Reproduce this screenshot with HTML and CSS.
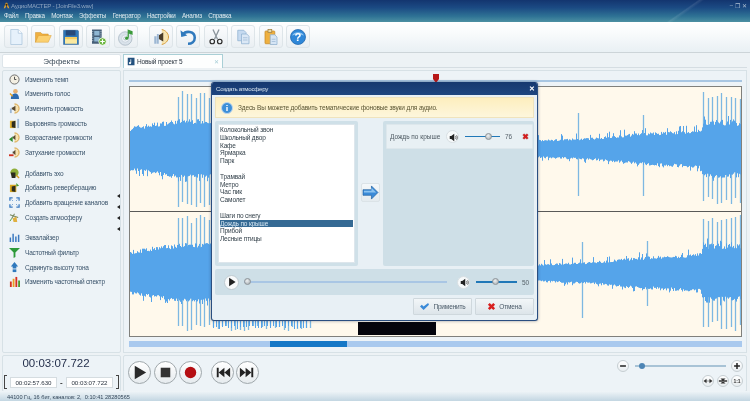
FILE: index.html
```html
<!DOCTYPE html>
<html lang="ru">
<head>
<meta charset="utf-8">
<title>АудиоМАСТЕР</title>
<link rel="stylesheet" href="styles.css">
</head>
<body>
<div class="app">
  <header class="titlebar">
    <div class="title-row">
      <svg class="app-icon" viewBox="0 0 10 10"><path d="M1 9 4 1h2l3 8H7L5 5 3 9z" fill="#e0a030"/><circle cx="5" cy="4" r="1.6" fill="#3a2a10"/></svg>
      <span class="title-text">АудиоМАСТЕР - [JoinFile3.wav]</span>
      <div class="win-btns"><span>–</span><span>❐</span><span>✕</span></div>
    </div>
    <nav class="menu"><span>Файл</span><span>Правка</span><span>Монтаж</span><span>Эффекты</span><span>Генератор</span><span>Настройки</span><span>Анализ</span><span>Справка</span></nav>
    <div class="streak"></div>
  </header>

  <div class="toolbar">
    <div class="tb"><svg viewBox="0 0 24 24"><path d="M5 2h10l5 5v15H5z" fill="#e6f1fb" stroke="#a9c4dc"/><path d="M15 2v5h5" fill="#fff" stroke="#a9c4dc"/></svg></div>
    <div class="tb"><svg viewBox="0 0 24 24"><path d="M2 19V6h7l2 2h8v3H7z" fill="#f0b040" stroke="#c98a20" stroke-width=".6"/><path d="M2 19l4-9h17l-4 9z" fill="#fbd070" stroke="#d89a30" stroke-width=".6"/></svg></div>
    <div class="tb"><svg viewBox="0 0 24 24"><path d="M2 3h19l1 1v18H2z" fill="#2f77b8" stroke="#255a8a" stroke-width=".6"/><rect x="5" y="3" width="13" height="7" fill="#26497a"/><rect x="4" y="12" width="16" height="9" fill="#fbe9a0"/><rect x="4" y="12" width="16" height="3" fill="#f5cd60"/></svg></div>
    <div class="tb"><svg viewBox="0 0 24 24"><rect x="4" y="2" width="13" height="19" fill="#465f78"/><rect x="7" y="4" width="7" height="6" fill="#8fb6d2"/><rect x="7" y="12" width="7" height="6" fill="#8fb6d2"/><path d="M5 4v15M16 4v15" stroke="#cfdde8" stroke-dasharray="1.5 1.5"/><circle cx="18" cy="18" r="5" fill="#68b43c" stroke="#fff"/><path d="M18 15v6M15 18h6" stroke="#fff" stroke-width="1.6"/></svg></div>
    <div class="tb"><svg viewBox="0 0 24 24"><circle cx="11" cy="14" r="9" fill="#d9e2ea" stroke="#a6b4c0"/><circle cx="11" cy="14" r="5" fill="#eef3f7" stroke="#c3ced8"/><circle cx="11" cy="14" r="2" fill="#fff" stroke="#9fb0bf"/><path d="M15 5V13M15 3l5 2v3l-5-2z" stroke="#3a9a3a" stroke-width="1.6" fill="#3a9a3a"/><circle cx="13" cy="13.500" r="2.200" fill="#3a9a3a"/></svg></div>
    <div class="tb tb-gap"><svg viewBox="0 0 24 24"><path d="M13 2c5 1 9 5 9 10s-4 9-9 10" fill="#f7e4b0" stroke="#d59a35" stroke-width="1.300"/><path d="M15 6v12L9 14.500V9.500z" fill="#4a3c28"/><path d="M3 11h3v10H3zM6.500 8h2.500v13H6.500z" fill="#9db7d3"/></svg></div>
    <div class="tb"><svg viewBox="0 0 24 24"><path d="M5 9c4-6 16-5 16 4 0 5-4 8-9 8" fill="none" stroke="#2f79bd" stroke-width="3.400"/><path d="M2 3l1 9 8-2z" fill="#2f79bd"/></svg></div>
    <div class="tb"><svg viewBox="0 0 24 24"><path d="M8 2l6 13M16 2l-6 13" stroke="#8d969d" stroke-width="1.800"/><circle cx="7" cy="18" r="3" fill="none" stroke="#2c2c2c" stroke-width="1.600"/><circle cx="17" cy="18" r="3" fill="none" stroke="#2c2c2c" stroke-width="1.600"/></svg></div>
    <div class="tb"><svg viewBox="0 0 24 24"><path d="M5 3h8l3 3v11H5z" fill="#c6daf0" stroke="#8fb0d0"/><path d="M10 8h7l3 3v10H10z" fill="#dbe8f6" stroke="#8fb0d0"/><path d="M12 13h6M12 16h6" stroke="#9db8d4"/></svg></div>
    <div class="tb"><svg viewBox="0 0 24 24"><rect x="4" y="4" width="13" height="17" rx="1" fill="#efb040" stroke="#c58a25"/><rect x="8" y="2" width="5" height="4" fill="#e8d8a8" stroke="#a08040"/><path d="M11 9h6l3 3v10h-9z" fill="#d6e5f5" stroke="#8fb0d0"/><path d="M13 15h5M13 18h5" stroke="#9db8d4"/></svg></div>
    <div class="tb"><svg viewBox="0 0 24 24"><circle cx="12" cy="12" r="10" fill="#2f87d8" stroke="#1f66ac"/><path d="M4 10a9 8 0 0 1 16 0c-4-2-12-2-16 0" fill="#8cc3f0"/><text x="12" y="17.500" class="help-q">?</text></svg></div>
  </div>

  <div class="body">
    <div class="fx-title">Эффекты</div>
    <div class="tabs">
      <div class="tab">
        <svg class="ico" viewBox="0 0 12 12"><rect x="1" y="1" width="9" height="10" fill="#24527f"/><path d="M5 3v5" stroke="#fff"/><circle cx="4" cy="8" r="1.500" fill="#fff"/></svg>
        <span>Новый проект 5</span><i class="tab-x">✕</i>
      </div>
    </div>

    <aside class="side">
      <div class="fx-group">
        <div class="fx"><svg viewBox="0 0 12 12"><circle cx="6" cy="6" r="5" fill="#f3efe2" stroke="#666"/><path d="M6 3v3h2" stroke="#444" fill="none"/></svg><span>Изменить темп</span></div>
        <div class="fx"><svg viewBox="0 0 12 12"><circle cx="7" cy="3.500" r="2.500" fill="#e8b070"/><path d="M2 12c0-5 3-6 5-6s4 2 4 6z" fill="#2d6bb0"/><path d="M1 6l3 3" stroke="#e8a020" stroke-width="1.500"/></svg><span>Изменить голос</span></div>
        <div class="fx"><svg viewBox="0 0 12 12"><path d="M6 1c3 0 5 2 5 5s-2 5-5 5" fill="#f6e2b0" stroke="#d59a35"/><path d="M7 3v6L4 7H3V5h1z" fill="#5a4a30"/><path d="M1 6h2v5H1z" fill="#9db7d3"/></svg><span>Изменить громкость</span></div>
        <div class="fx"><svg viewBox="0 0 12 12"><path d="M1 3h6v8H1z" fill="#e0b030"/><path d="M3 4v6l4 1V3z" fill="#2c2c20"/><path d="M9 1h2v10H9z" fill="#9db7d3"/></svg><span>Выровнять громкость</span></div>
        <div class="fx"><svg viewBox="0 0 12 12"><path d="M6 1c3 0 5 2 5 5s-2 5-5 5" fill="#f6e2b0" stroke="#d59a35"/><path d="M7 3v6L5 7H4V5h1z" fill="#5a4a30"/><path d="M0 8l4-3v6z" fill="#2e8c30"/></svg><span>Возрастание громкости</span></div>
        <div class="fx"><svg viewBox="0 0 12 12"><path d="M6 1c3 0 5 2 5 5s-2 5-5 5" fill="#f6e2b0" stroke="#d59a35"/><path d="M7 3v6L5 7H4V5h1z" fill="#5a4a30"/><path d="M5 9H0" stroke="#d03020" stroke-width="2"/></svg><span>Затухание громкости</span></div>
      </div>
      <div class="fx-group">
        <div class="fx"><svg viewBox="0 0 12 12"><circle cx="6" cy="5" r="4.500" fill="#8fae3a"/><path d="M2 5h5v6H3z" fill="#2c2c20"/><path d="M8 8l3 3" stroke="#d8a020" stroke-width="1.500"/></svg><span>Добавить эхо</span></div>
        <div class="fx"><svg viewBox="0 0 12 12"><path d="M1 3h7v8H1z" fill="#d8a820"/><path d="M3 5v5l4 1V4z" fill="#2c2c20"/><path d="M8 1l3 3-3 1z" fill="#4a9a30"/></svg><span>Добавить реверберацию</span></div>
        <div class="fx"><svg viewBox="0 0 12 12"><path d="M1 4V1h3M8 1h3v3M11 8v3H8M4 11H1V8" fill="none" stroke="#3a79c0" stroke-width="1.400"/><path d="M3 3l1 1M9 3L8 4M9 9L8 8M3 9l1-1" stroke="#3a79c0"/></svg><span>Добавить вращение каналов</span></div>
        <div class="fx"><svg viewBox="0 0 12 12"><path d="M1 3l9 3M6 2l-3 5" stroke="#7a8a60" stroke-width="1.200"/><path d="M4 7l4-2 1 6H5z" fill="#e0b040"/><path d="M1 10l2-3" stroke="#4a9a30"/></svg><span>Создать атмосферу</span></div>
      </div>
      <div class="fx-group">
        <div class="fx"><svg viewBox="0 0 12 12"><path d="M1.500 11V6M4.500 11V2M7.500 11V5M10.500 11V3" stroke="#3a79c0" stroke-width="1.600"/></svg><span>Эквалайзер</span></div>
        <div class="fx"><svg viewBox="0 0 12 12"><path d="M0 1h12L7 6v5l-2 1V6z" fill="#2d9a3a"/></svg><span>Частотный фильтр</span></div>
        <div class="fx"><svg viewBox="0 0 12 12"><path d="M6 0l4 5H8v2H4V5H2z" fill="#2f79bd"/><path d="M4 8h4v3H4z" fill="#2f79bd"/></svg><span>Сдвинуть высоту тона</span></div>
        <div class="fx"><svg viewBox="0 0 12 12"><path d="M1 6h2v6H1z" fill="#d83020"/><path d="M4 3h2v9H4z" fill="#e8a020"/><path d="M7 1h2v11H7z" fill="#d83020"/><path d="M10 5h2v7h-2z" fill="#4a9a30"/></svg><span>Изменить частотный спектр</span></div>
      </div>
      <div class="side-arrows"><i></i><i></i><i></i><i></i></div>
    </aside>

    <main class="main">
      <div class="ruler"><div class="ruler-line"></div><svg class="pin" viewBox="0 0 6 9"><path d="M0 0h6v5L3 9 0 5z" fill="#b81818"/></svg></div>
      <div class="wave">
        <div class="channel" id="ch1"></div>
        <div class="channel" id="ch2"></div>
        <div class="black"></div>
      </div>
      <div class="overview"><div class="ov-bar"><div class="ov-sel"></div></div></div>
    </main>

    <section class="time-panel">
      <div class="clock">00:03:07.722</div>
      <div class="range">
        <b class="brk-l"></b><span class="field">00:02:57.630</span><em>-</em><span class="field">00:03:07.722</span><b class="brk-r"></b>
      </div>
    </section>

    <section class="transport">
      <div class="tr-btns">
        <div class="rnd"><svg viewBox="0 0 22 22"><path d="M6 4l12 7-12 7z" fill="#2a2a2a"/></svg></div>
        <div class="rnd"><svg viewBox="0 0 22 22"><rect x="6" y="6" width="10" height="10" fill="#333"/></svg></div>
        <div class="rnd"><svg viewBox="0 0 22 22"><circle cx="11" cy="11" r="6" fill="#b50e12"/></svg></div>
        <div class="rnd rnd-gap"><svg viewBox="0 0 22 22"><path d="M5 6h2v10H5zM7 11l6-5v10zM13 11l6-5v10z" fill="#222"/></svg></div>
        <div class="rnd"><svg viewBox="0 0 22 22"><path d="M17 6h-2v10h2zM15 11L9 6v10zM9 11L3 6v10z" fill="#222"/></svg></div>
      </div>
      <div class="zoom">
        <div class="zoom-row">
          <div class="rnd-s"><svg viewBox="0 0 12 12"><path d="M2.500 6h7" stroke="#222" stroke-width="1.800"/></svg></div>
          <div class="zoom-track"><div class="zoom-knob"></div></div>
          <div class="rnd-s"><svg viewBox="0 0 12 12"><path d="M2.500 6h7M6 2.500v7" stroke="#222" stroke-width="1.800"/></svg></div>
        </div>
        <div class="zoom-row2">
          <div class="rnd-xs"><svg viewBox="0 0 12 12"><path d="M1 6l3-2v4zM11 6L8 4v4zM4 6h4" fill="#333" stroke="#333" stroke-width=".6"/></svg></div>
          <div class="rnd-xs"><svg viewBox="0 0 12 12"><path d="M1 5h10v2H1zM6 6L3 3h6zM6 6l-3 3h6z" fill="#333"/></svg></div>
          <div class="rnd-xs one">1:1</div>
        </div>
      </div>
    </section>
  </div>

  <footer class="status">44100 Гц, 16 бит, каналов: 2,&nbsp; 0:10:41 28280565</footer>

  <div class="dialog">
    <div class="dlg-title"><span>Создать атмосферу</span><i>✕</i></div>
    <div class="dlg-body">
      <div class="banner">
        <svg viewBox="0 0 12 12"><circle cx="6" cy="6" r="5.500" fill="#3d8fd8" stroke="#bcd6ee"/><path d="M6 5v4M6 3v1" stroke="#fff" stroke-width="1.400"/></svg>
        <span>Здесь Вы можете добавить тематические фоновые звуки для аудио.</span>
      </div>
      <div class="dlg-cols">
        <div class="list-panel">
          <ul class="list">
            <li>Колокольный звон</li><li>Школьный двор</li><li>Кафе</li><li>Ярмарка</li><li>Парк</li><li>&nbsp;</li>
            <li>Трамвай</li><li>Метро</li><li>Час пик</li><li>Самолет</li><li>&nbsp;</li>
            <li>Шаги по снегу</li><li class="sel">Дождь по крыше</li><li>Прибой</li><li>Лесные птицы</li>
          </ul>
        </div>
        <div class="arrow-col">
          <div class="arrow-btn"><svg viewBox="0 0 18 16"><path d="M1 5h9V1l7 7-7 7v-4H1z" fill="#3a8ad8" stroke="#1f5f9f" stroke-width=".7"/><path d="M2 6h8V3l5 5H2z" fill="#8cc3f0"/></svg></div>
        </div>
        <div class="sound-panel">
          <div class="sound-row">
            <span class="sound-name">Дождь по крыше</span>
            <div class="vol-btn"><svg viewBox="0 0 12 12"><path d="M1 4h2l4-3v10L3 8H1z" fill="#222"/><path d="M8.500 4c1 1 1 3 0 4M10 3c1.500 1.500 1.500 4.500 0 6" fill="none" stroke="#222" stroke-width=".8"/></svg></div>
            <div class="slider s-row"><div class="knob k-row"></div></div>
            <span class="val">76</span>
            <svg class="del" viewBox="0 0 10 10"><path d="M1 3l2-2 2 2 2-2 2 2-2 2 2 2-2 2-2-2-2 2-2-2 2-2z" fill="#d82020" stroke="#901010" stroke-width=".4"/></svg>
          </div>
        </div>
      </div>
      <div class="player">
        <div class="play-btn"><svg viewBox="0 0 14 14"><path d="M3 1l9 6-9 6z" fill="#222"/></svg></div>
        <div class="seek"><div class="knob k-seek"></div></div>
        <div class="vol-btn v2"><svg viewBox="0 0 12 12"><path d="M1 4h2l4-3v10L3 8H1z" fill="#222"/><path d="M8.500 4c1 1 1 3 0 4M10 3c1.500 1.500 1.500 4.500 0 6" fill="none" stroke="#222" stroke-width=".8"/></svg></div>
        <div class="slider s-play"><div class="knob k-play"></div></div>
        <span class="val">50</span>
      </div>
      <div class="actions">
        <div class="btn"><svg class="ok" viewBox="0 0 12 10"><path d="M1 5l2-2 2 2 5-4 1 2-6 6z" fill="#3a8ad8"/></svg><span>Применить</span></div>
        <div class="btn"><svg viewBox="0 0 10 10"><path d="M1 3l2-2 2 2 2-2 2 2-2 2 2 2-2 2-2-2-2 2-2-2 2-2z" fill="#d82020"/></svg><span>Отмена</span></div>
      </div>
    </div>
  </div>
</div>
<script src="wave.js"></script>
</body>
</html>
```

FILE: styles.css
```css
* { box-sizing: border-box; }
html, body { margin: 0; padding: 0; }
body { width: 750px; height: 401px; overflow: hidden; background: #edf2f5; }
.app {
  position: relative; width: 750px; height: 401px; overflow: hidden;
  display: flex; flex-direction: column;
  background: #edf2f5;
  font-family: "Liberation Sans", Arial, sans-serif; font-size: 6.5px; color: #2c3c4c;
  filter: blur(.35px);
}
.titlebar {
  position: relative; height: 22px; flex: none; overflow: hidden;
  background: linear-gradient(#13356f 0, #1b4a83 35%, #2f7395 75%, #4c90a2 100%);
}
.title-row { display: flex; align-items: center; height: 10px; padding: 0 3px; }
.app-icon { width: 7px; height: 7px; margin-right: 1px; }
.title-text { color: #8ca3bf; font-size: 6.2px; letter-spacing: -.25px; }
.win-btns { margin-left: auto; display: flex; gap: 2px; color: #aebfd2; font-size: 6px; }
.menu { display: flex; gap: 6.5px; padding: 2px 0 0 4px; color: #dfe9ef; font-size: 6.3px; letter-spacing: -.25px; }
.streak {
  position: absolute; right: 40px; top: -6px; width: 60px; height: 40px;
  background: linear-gradient(145deg, transparent 48%, rgba(255,255,255,.1) 50%, transparent 54%);
}
.toolbar {
  height: 31px; flex: none; display: flex; align-items: flex-start; gap: 3.4px;
  padding: 3px 0 0 4px;
  background: linear-gradient(#fff 0, #f9fbfc 35%, #e9f0f4 100%);
  border-bottom: 1px solid #ccd4d8;
}
.tb {
  width: 24px; height: 23px; flex: none; padding: 2px;
  border: 1px solid #dee5e9; border-radius: 3px;
  background: linear-gradient(#fbfcfd, #eaeff3);
}
.tb svg { display: block; width: 18px; height: 18px; }
.tb-gap { margin-left: 8px; }
.help-q { font: bold 15px "Liberation Sans", sans-serif; fill: #fff; text-anchor: middle; }

.body {
  flex: 1; display: grid;
  grid-template-columns: 119px 624px; grid-template-rows: 14px 283px 37px;
  column-gap: 2px; row-gap: 2px;
  padding: 1px 0 0 2px;
}
.fx-title {
  background: #fff; border: 1px solid #dde5ea; border-radius: 2px;
  text-align: center; font-size: 8px; line-height: 13px; color: #3a4a58;
}
.tabs { border-bottom: 1px solid #d5dde2; }
.tab {
  width: 100px; height: 14px; display: flex; align-items: center; gap: 1px; padding: 0 3px;
  background: #fdfefe; border: 1px solid #a9cfd6; border-bottom: 0; color: #2c3540;
  font-size: 6.5px; letter-spacing: -.15px;
}
.ico { width: 9px; height: 11px; }
.tab-x { margin-left: auto; font-style: normal; color: #a6cdd6; font-size: 6px; }

.side {
  position: relative; background: #edf3f7; border: 1px solid #d7e1e6; border-radius: 2px;
  padding: 1px 0 0 6px; display: flex; flex-direction: column; gap: 6px;
}
.fx {
  height: 14.67px; display: flex; align-items: center; gap: 5px; white-space: nowrap; color: #39526a;
  letter-spacing: -.18px;
}
.fx svg { width: 11px; height: 11px; flex: none; }
.side-arrows { position: absolute; right: 0; top: 123px; display: flex; flex-direction: column; gap: 7px; }
.side-arrows i { width: 0; height: 0; border: 2px solid transparent; border-right: 3px solid #222; border-left: 0; }

.main {
  position: relative; background: #edf3f7; border: 1px solid #d7e1e6;
  display: flex; flex-direction: column; padding: 0 4px 0 5px;
}
.ruler { position: relative; height: 15px; flex: none; padding-top: 9px; }
.ruler-line { height: 1.5px; background: #a8c6e2; }
.pin { position: absolute; left: 304px; top: 3px; width: 6px; height: 9px; }
.wave {
  position: relative; height: 251px; flex: none;
  border: 1px solid #80807c; display: flex; flex-direction: column; gap: 1px;
  background: #5a5a58;
}
.channel { flex: 1; background: #fff9ec; overflow: hidden; }
.channel svg { display: block; }
.black { position: absolute; left: 228px; top: 235px; width: 78px; height: 13px; background: #04040c; }
.overview { flex: 1; padding-top: 4px; }
.ov-bar { position: relative; height: 6px; background: #a9c9ee; }
.ov-sel { position: absolute; left: 141px; top: 0; width: 77px; height: 6px; background: #1577c6; }

.time-panel {
  background: #edf3f7; border: 1px solid #d7e1e6; border-radius: 2px;
  display: flex; flex-direction: column; align-items: center;
}
.clock { font-size: 11.500px; line-height: 14px; color: #25304c; margin: 0 11px 0 0; }
.range { display: flex; align-items: center; gap: 3px; margin-top: 5px; }
.field {
  width: 47px; height: 11px; background: #fff; border: 1px solid #d5dce0;
  text-align: center; font-size: 6.2px; line-height: 9px; color: #2c3540;
}
.range em { font-style: normal; font-weight: bold; font-size: 8px; line-height: 9px; color: #333; width: 3px; }
.brk-l, .brk-r { width: 3px; height: 14px; border: 1px solid #444; }
.brk-l { border-right: 0; }
.brk-r { border-left: 0; }

.transport {
  background: #edf3f7; border: 1px solid #d7e1e6; border-radius: 2px;
  display: flex; justify-content: space-between; padding: 5px 0 0 4px;
}
.tr-btns { display: flex; gap: 2.500px; }
.rnd {
  width: 23px; height: 23px; border-radius: 50%; border: 1px solid #a0a8ac;
  background: linear-gradient(#fff, #e6ebee);
}
.rnd svg { display: block; width: 21px; height: 21px; }
.rnd-gap { margin-left: 6px; }
.zoom { width: 126px; margin-right: 3px; margin-top: -1px; }
.zoom-row { display: flex; align-items: center; justify-content: space-between; }
.rnd-s, .rnd-xs {
  border-radius: 50%; border: 1px solid #c6ced2; background: linear-gradient(#fff, #e8edf0); flex: none;
}
.rnd-s { width: 12px; height: 12px; }
.rnd-s svg { display: block; width: 10px; height: 10px; }
.zoom-track { position: relative; width: 91px; height: 2px; background: #a8c3d6; }
.zoom-knob {
  position: absolute; left: 4px; top: -2px; width: 6px; height: 6px; border-radius: 50%;
  background: #4d85b5;
}
.zoom-row2 { display: flex; justify-content: flex-end; gap: 2.500px; margin-top: 3px; }
.rnd-xs { width: 12px; height: 12px; }
.rnd-xs svg { display: block; width: 10px; height: 10px; }
.one { font-size: 5px; line-height: 10px; text-align: center; font-weight: bold; color: #333; }

.status {
  position: absolute; left: 0; right: 0; bottom: 0; height: 10px; padding: 2px 0 0 7px;
  background: linear-gradient(#f0f5f8, #c3d6e2); font-size: 5.600px; line-height: 8px; color: #33475a;
}

.dialog {
  position: absolute; left: 211px; top: 82px; width: 327px; height: 239px;
  background: #e8f0f5; border: 1px solid #2a4e80; border-top: 0; border-radius: 3px;
  box-shadow: 0 0 3px rgba(30,50,80,.5);
  display: flex; flex-direction: column; overflow: hidden;
}
.dlg-title {
  height: 13px; flex: none; display: flex; align-items: center; justify-content: space-between;
  padding: 0 2px 0 4px; background: linear-gradient(#16386f, #1d457f);
  color: #d8e4ee; font-size: 6.200px; letter-spacing: -.3px;
}
.dlg-title i { font-style: normal; color: #fff; font-size: 7px; font-weight: bold; }
.dlg-body { flex: 1; padding: 2px 3px 0 3px; display: flex; flex-direction: column; }
.banner {
  height: 21px; display: flex; align-items: center; gap: 5px; padding-left: 5px;
  background: linear-gradient(#fdeebe, #fdf6dc); border: 1px solid #efe3bd;
  font-size: 6.500px; letter-spacing: -.13px; color: #5a5430;
}
.banner svg { width: 12px; height: 12px; flex: none; }
.dlg-cols { display: flex; margin-top: 3px; height: 145px; }
.list-panel { width: 143px; padding: 3px; background: #cfe0e8; border-radius: 2px; flex: none; }
.list {
  list-style: none; margin: 0; padding: 1px 1px; height: 139px; background: #fff; border: 1px solid #dde6ec;
  font-size: 6.500px; letter-spacing: -.15px; color: #33404a;
}
.list li { height: 7.8px; line-height: 7.8px; white-space: nowrap; }
.list .sel { background: #356a94; color: #d5e6f2; }
.arrow-col { width: 25px; flex: none; padding: 62px 0 0 3px; }
.arrow-btn {
  width: 19px; height: 19px; padding: 1px 0; background: linear-gradient(#f4f8fa, #e4ebef);
  border: 1px solid #dbe3e7; border-radius: 2px;
}
.arrow-btn svg { display: block; width: 17px; height: 15px; }
.sound-panel { flex: 1; background: #cedfe7; border-radius: 2px; padding: 3px 1px 0 3px; }
.sound-row {
  height: 25px; display: flex; align-items: center; padding-left: 3px;
  background: #e8f0f4; border: 1px solid #dde7ec; border-radius: 1px; color: #4c5860; font-size: 6.500px;
}
.sound-name { width: 56px; flex: none; white-space: nowrap; }
.vol-btn {
  width: 13px; height: 13px; flex: none; padding: 1.500px; border-radius: 50%;
  background: #f6f9fa; border: 1px solid #d8dfe3;
}
.vol-btn svg { display: block; width: 9px; height: 9px; }
.slider { position: relative; height: 1.500px; background: #2078b8; flex: none; }
.s-row { width: 35px; margin-left: 6px; }
.knob {
  position: absolute; top: -3px; width: 7px; height: 7px; border-radius: 50%;
  background: radial-gradient(circle at 40% 35%, #eef1f3, #a2a8ac);
  border: .5px solid #8d9498;
}
.k-row { left: 20px; }
.val { font-size: 6.500px; color: #56626a; }
.s-row + .val { margin-left: 5px; }
.del { width: 7px; height: 7px; margin-left: 10px; flex: none; }
.player {
  height: 26px; margin-top: 3px; display: flex; align-items: center; padding-left: 9px;
  background: #cedfe7; border-radius: 2px;
}
.play-btn {
  width: 15px; height: 15px; flex: none; padding: 1.500px; border-radius: 50%;
  background: #f8fafb; border: 1px solid #bfcad0;
}
.play-btn svg { display: block; width: 10px; height: 10px; }
.seek { position: relative; width: 203px; height: 1.500px; margin-left: 5px; background: #a9c6e4; flex: none; }
.k-seek { left: 0; }
.v2 { margin-left: 10px; }
.s-play { width: 41px; margin-left: 6px; }
.k-play { left: 16px; }
.s-play + .val { margin-left: 5px; }
.actions { display: flex; justify-content: flex-end; gap: 3px; margin-top: 3px; padding-right: 0; }
.btn {
  width: 59px; height: 17px; display: flex; align-items: center; justify-content: center; gap: 3px;
  background: linear-gradient(#f2f6f8, #dde5ea); border: 1px solid #cfd8dd; border-radius: 1px;
  color: #4a5a68; font-size: 6.500px; letter-spacing: -.15px;
}
.btn svg { width: 9px; height: 9px; flex: none; }
.btn .ok { width: 11px; }
```

FILE: wave.js
```js
(function () {
  var seed = 7;
  function rnd() {
    seed = (seed * 16807) % 2147483647;
    return seed / 2147483647;
  }
  var X0 = 130, W = 611, H = 124, NS = "http://www.w3.org/2000/svg";
  var RIGHT = [[530, 7], [590, 9], [640, 13], [665, 14], [700, 16], [704, 24], [742, 23]];
  var LEFT = [[130, 18], [150, 21], [178, 25], [215, 25]];

  function lerp(t, x) {
    for (var i = 0; i < t.length - 1; i++) {
      if (x <= t[i + 1][0]) {
        var k = (x - t[i][0]) / (t[i + 1][0] - t[i][0]);
        return t[i][1] + (t[i + 1][1] - t[i][1]) * Math.max(0, k);
      }
    }
    return t[t.length - 1][1];
  }

  function build(id, centre, extra, ticks) {
    var solid = "", light = "", x;
    for (x = X0; x < X0 + W; x++) {
      var px = x - X0 + 0.5;
      var a = x < 300 ? lerp(LEFT, x) : x >= 530 ? lerp(RIGHT, x) : 0;
      if (a) {
        var up = a + rnd() * (x < 300 ? 5 : a * 0.25);
        var dn = a + rnd() * (x < 300 ? 4 : a * 0.25);
        if (x < 300 && rnd() > 0.85) dn += 4;
        if (x >= 530 && rnd() > 0.88) up += 5;
        if (x >= 530 && rnd() > 0.9) dn += 3;
        solid += "M" + px + " " + (centre - up).toFixed(1) + "V" + (centre + dn).toFixed(1);
      }
    }
    function spike(x, top, bot) {
      light += "M" + (x - X0 + 0.5) + " " + (centre - top) + "V" + (centre + bot);
    }
    for (x = 178; x < 310; x += 4.4) {
      spike(Math.round(x), 50 + Math.round(rnd() * 8), 52 + Math.round(rnd() * 6));
    }
    for (x = 703; x < 741; x += 4.6) {
      spike(Math.round(x), 50 + Math.round(rnd() * 8), 48 + Math.round(rnd() * 10));
    }
    extra.forEach(function (s) { spike(s[0], s[1], s[2]); });
    if (ticks) {
      for (x = 213; x < 309; x += 3) {
        solid += "M" + (x - X0 + 0.5) + " " + (centre + 40) + "V" + (centre + 53 + Math.round(rnd() * 3));
      }
    }

    var svg = document.createElementNS(NS, "svg");
    svg.setAttribute("width", W);
    svg.setAttribute("height", H);
    [[light, "#7db8e2", "1.3"], [solid, "#55a4ea", "1"]].forEach(function (l) {
      var p = document.createElementNS(NS, "path");
      p.setAttribute("d", l[0]);
      p.setAttribute("stroke", l[1]);
      p.setAttribute("stroke-width", l[2]);
      p.setAttribute("fill", "none");
      svg.appendChild(p);
    });
    document.getElementById(id).appendChild(svg);
  }

  build("ch1", 62, [[578, 36, 47], [643, 34, 47]], false);
  build("ch2", 61, [[582, 31, 45], [647, 32, 33]], true);
})();
```
